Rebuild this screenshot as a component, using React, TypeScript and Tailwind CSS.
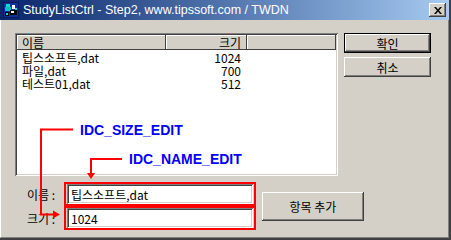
import React from "react";

const raised =
  "shadow-[inset_-1px_-1px_#404040,inset_1px_1px_#ffffff,inset_-2px_-2px_#808080,inset_2px_2px_#d4d0c8]";
const sunken =
  "shadow-[inset_1px_1px_#808080,inset_-1px_-1px_#ffffff,inset_2px_2px_#404040,inset_-2px_-2px_#d4d0c8]";
const headerRaised =
  "shadow-[inset_-1px_-1px_#404040,inset_1px_1px_#ffffff,inset_2px_2px_#d4d0c8]";

function TitleIcon() {
  return (
    <svg width="16" height="16" viewBox="0 0 16 16" className="shrink-0">
      <rect x="0" y="0" width="16" height="16" fill="#0a1a5a" />
      <rect x="1" y="1" width="14" height="14" fill="#1030a0" />
      <rect x="3" y="2" width="4" height="3" fill="#00e0e0" />
      <rect x="2" y="5" width="6" height="4" fill="#00c0c0" />
      <rect x="9" y="3" width="3" height="4" fill="#ffffff" />
      <rect x="7" y="8" width="7" height="5" fill="#000000" />
      <rect x="8" y="9" width="3" height="2" fill="#ffffff" />
      <rect x="2" y="10" width="4" height="4" fill="#000000" />
      <rect x="3" y="11" width="2" height="2" fill="#00e0e0" />
      <rect x="12" y="6" width="2" height="2" fill="#00e0e0" />
    </svg>
  );
}

export default function App() {
  const rows = [
    ["팁스소프트,dat", "1024"],
    ["파일,dat", "700"],
    ["테스트01,dat", "512"],
  ];
  return (
    <div className="relative w-[451px] h-[240px] bg-[#d4d0c8] border-r-2 border-b-2 border-[#404040] flex flex-col overflow-hidden font-['Noto_Sans_CJK_KR','Noto_Sans',sans-serif] text-[12px] leading-[13px] text-black">
      {/* Title bar */}
      <div className="h-[20px] shrink-0 flex items-center bg-gradient-to-r from-[#0a246a] to-[#a6caf0] pl-[3px] pr-[3px]">
        <TitleIcon />
        <div className="ml-[4px] text-white font-['Liberation_Sans',sans-serif] text-[12.5px] leading-[16px] whitespace-nowrap">
          StudyListCtrl - Step2, www.tipssoft.com / TWDN
        </div>
        <div className="flex-1" />
        <div
          className={`w-[17px] h-[14px] bg-[#d4d0c8] flex items-center justify-center ${raised}`}
        >
          <svg width="8" height="7" viewBox="0 0 8 7">
            <path d="M0 0h2l2 2.5L6 0h2L5 3.5 8 7H6L4 4.5 2 7H0l3-3.5z" fill="#000" />
          </svg>
        </div>
      </div>

      {/* Body */}
      <div className="flex-1 flex border-l border-white border-r border-b border-r-[#808080] border-b-[#808080]">
        <div className="w-[337px] shrink-0 flex flex-col pl-[14px] pt-[13px]">
          {/* List view */}
          <div className={`w-[323px] h-[143px] shrink-0 bg-white p-[2px] ${sunken}`}>
            <div className="flex h-[15px]">
              <div className={`w-[149px] h-[15px] bg-[#d4d0c8] pl-[5px] pt-[1px] ${headerRaised}`}>
                이름
              </div>
              <div className={`w-[81px] h-[15px] bg-[#d4d0c8] pr-[6px] pt-[1px] text-right ${headerRaised}`}>
                크기
              </div>
              <div className={`flex-1 h-[15px] bg-[#d4d0c8] ${headerRaised}`} />
            </div>
            <div className="flex flex-col pt-[1px]">
              {rows.map(([n, s]) => (
                <div key={n} className="flex h-[13px] items-center">
                  <div className="w-[149px] pl-[5px] whitespace-nowrap leading-[13px]">{n}</div>
                  <div className="w-[75px] text-right leading-[13px]">{s}</div>
                </div>
              ))}
            </div>
          </div>

          {/* Form */}
          <div className="flex mt-[6px] w-[350px] shrink-0">
            <div className="flex flex-col">
              <div className="flex items-center">
                <div className="w-[49px] pl-[12px] whitespace-nowrap">이름 :</div>
                <div className="border-2 border-[#ff0000] px-[1px]">
                  <div className={`w-[186px] h-[20px] bg-white pl-[4px] pt-[4px] ${sunken}`}>
                    팁스소프트,dat
                  </div>
                </div>
              </div>
              <div className="flex items-center">
                <div className="w-[49px] pl-[12px] whitespace-nowrap">크기 :</div>
                <div className="border-2 border-[#ff0000] px-[1px]">
                  <div className={`w-[186px] h-[20px] bg-white pl-[4px] pt-[4px] ${sunken}`}>
                    1024
                  </div>
                </div>
              </div>
            </div>
            <div
              className={`ml-[6px] mt-[10px] w-[102px] h-[29px] shrink-0 bg-[#d4d0c8] flex items-center justify-center ${raised}`}
            >
              항목 추가
            </div>
          </div>
        </div>

        {/* Right buttons */}
        <div className="flex flex-col pl-[6px] pt-[13px] gap-[4px]">
          <div className="w-[87px] h-[20px] border border-black">
            <div
              className={`w-full h-full bg-[#d4d0c8] flex items-center justify-center ${raised}`}
            >
              확인
            </div>
          </div>
          <div
            className={`w-[87px] h-[20px] bg-[#d4d0c8] flex items-center justify-center ${raised}`}
          >
            취소
          </div>
        </div>
      </div>

      {/* Annotations */}
      <svg
        className="absolute left-0 top-0 pointer-events-none"
        width="451"
        height="240"
        viewBox="0 0 451 240"
      >
        <polyline
          points="73,129.5 41,129.5 41,214.5 54,214.5"
          fill="none"
          stroke="#ff0000"
          strokeWidth="2"
        />
        <polygon points="53,210.5 60,214.5 53,218.5" fill="#ff0000" />
        <polyline
          points="122,159 91,159 91,174"
          fill="none"
          stroke="#ff0000"
          strokeWidth="2"
        />
        <polygon points="87,173 95,173 91,179" fill="#ff0000" />
      </svg>
      <div className="absolute left-[80px] top-[122px] text-[#0000ff] font-bold font-['Liberation_Sans',sans-serif] text-[14px] leading-[16px] whitespace-nowrap">
        IDC_SIZE_EDIT
      </div>
      <div className="absolute left-[129px] top-[151px] text-[#0000ff] font-bold font-['Liberation_Sans',sans-serif] text-[14px] leading-[16px] whitespace-nowrap">
        IDC_NAME_EDIT
      </div>
    </div>
  );
}
